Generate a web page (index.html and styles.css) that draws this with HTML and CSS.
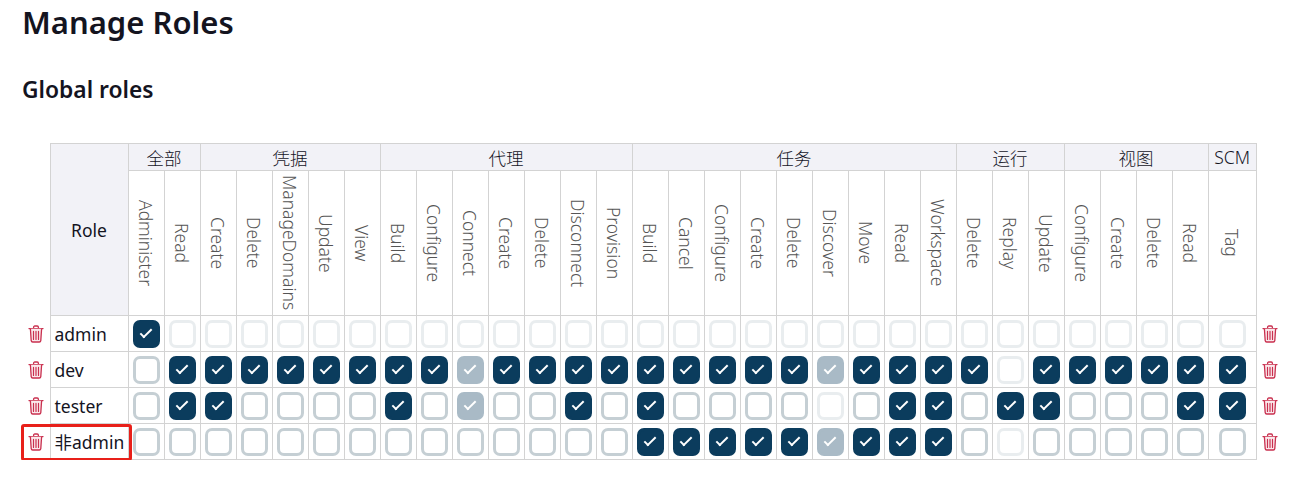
FILE: index.html
```html
<!DOCTYPE html>
<html lang="en">

<head>
    <meta charset="UTF-8">
    <meta name="viewport" content="width=device-width, initial-scale=1.0">
    <title>Manage Roles</title>
    <link rel="stylesheet" href="styles.css">
</head>

<body>

    <svg class="icon-defs" width="0" height="0">
        <symbol id="trash" viewBox="0 0 16 18">
            <path d="M1 3.6h14M5.6 3.4V2.2c0-.7.5-1.2 1.2-1.2h2.4c.7 0 1.2.5 1.2 1.2v1.2" fill="none" stroke="currentColor" stroke-width="1.3" stroke-linecap="round"/>
            <path d="M2.4 3.8l.8 11.8c.1.8.6 1.4 1.5 1.4h6.6c.9 0 1.4-.6 1.5-1.4l.8-11.8" fill="#fbe9ec" stroke="currentColor" stroke-width="1.3"/>
            <path d="M5.5 6.4v8M8 6.4v8M10.5 6.4v8" fill="none" stroke="currentColor" stroke-width="1.2" stroke-linecap="round"/>
        </symbol>
    </svg>

    <h1>Manage Roles</h1>
    <h2>Global roles</h2>

    <table class="role-table">
        <colgroup>
            <col class="col-del">
            <col class="col-role">
            <col span="30" class="col-perm">
            <col class="col-scm">
            <col class="col-del">
        </colgroup>
        <thead>
            <tr class="group-row">
                <th class="blank" rowspan="2"></th>
                <th class="role-head" rowspan="2">Role</th>
                <th colspan="2">全部</th>
                <th colspan="5">凭据</th>
                <th colspan="7">代理</th>
                <th colspan="9">任务</th>
                <th colspan="3">运行</th>
                <th colspan="4">视图</th>
                <th>SCM</th>
                <th class="blank" rowspan="2"></th>
            </tr>
            <tr class="perm-row">
                <th><span>Administer</span></th><th><span>Read</span></th>
                <th><span>Create</span></th><th><span>Delete</span></th><th><span>ManageDomains</span></th><th><span>Update</span></th><th><span>View</span></th>
                <th><span>Build</span></th><th><span>Configure</span></th><th><span>Connect</span></th><th><span>Create</span></th><th><span>Delete</span></th><th><span>Disconnect</span></th><th><span>Provision</span></th>
                <th><span>Build</span></th><th><span>Cancel</span></th><th><span>Configure</span></th><th><span>Create</span></th><th><span>Delete</span></th><th><span>Discover</span></th><th><span>Move</span></th><th><span>Read</span></th><th><span>Workspace</span></th>
                <th><span>Delete</span></th><th><span>Replay</span></th><th><span>Update</span></th>
                <th><span>Configure</span></th><th><span>Create</span></th><th><span>Delete</span></th><th><span>Read</span></th>
                <th><span>Tag</span></th>
            </tr>
        </thead>
        <tbody>
            <tr>
                <td class="del"><svg class="trash"><use href="#trash"/></svg></td>
                <td class="name">admin</td>
                <td><i class="cb on"></i></td><td><i class="cb off"></i></td>
                <td><i class="cb off"></i></td><td><i class="cb off"></i></td><td><i class="cb off"></i></td><td><i class="cb off"></i></td><td><i class="cb off"></i></td>
                <td><i class="cb off"></i></td><td><i class="cb off"></i></td><td><i class="cb off"></i></td><td><i class="cb off"></i></td><td><i class="cb off"></i></td><td><i class="cb off"></i></td><td><i class="cb off"></i></td>
                <td><i class="cb off"></i></td><td><i class="cb off"></i></td><td><i class="cb off"></i></td><td><i class="cb off"></i></td><td><i class="cb off"></i></td><td><i class="cb off"></i></td><td><i class="cb off"></i></td><td><i class="cb off"></i></td><td><i class="cb off"></i></td>
                <td><i class="cb off"></i></td><td><i class="cb off"></i></td><td><i class="cb off"></i></td>
                <td><i class="cb off"></i></td><td><i class="cb off"></i></td><td><i class="cb off"></i></td><td><i class="cb off"></i></td>
                <td><i class="cb off"></i></td>
                <td class="del"><svg class="trash"><use href="#trash"/></svg></td>
            </tr>
            <tr>
                <td class="del"><svg class="trash"><use href="#trash"/></svg></td>
                <td class="name">dev</td>
                <td><i class="cb"></i></td><td><i class="cb on"></i></td>
                <td><i class="cb on"></i></td><td><i class="cb on"></i></td><td><i class="cb on"></i></td><td><i class="cb on"></i></td><td><i class="cb on"></i></td>
                <td><i class="cb on"></i></td><td><i class="cb on"></i></td><td><i class="cb on off"></i></td><td><i class="cb on"></i></td><td><i class="cb on"></i></td><td><i class="cb on"></i></td><td><i class="cb on"></i></td>
                <td><i class="cb on"></i></td><td><i class="cb on"></i></td><td><i class="cb on"></i></td><td><i class="cb on"></i></td><td><i class="cb on"></i></td><td><i class="cb on off"></i></td><td><i class="cb on"></i></td><td><i class="cb on"></i></td><td><i class="cb on"></i></td>
                <td><i class="cb on"></i></td><td><i class="cb off"></i></td><td><i class="cb on"></i></td>
                <td><i class="cb on"></i></td><td><i class="cb on"></i></td><td><i class="cb on"></i></td><td><i class="cb on"></i></td>
                <td><i class="cb on"></i></td>
                <td class="del"><svg class="trash"><use href="#trash"/></svg></td>
            </tr>
            <tr>
                <td class="del"><svg class="trash"><use href="#trash"/></svg></td>
                <td class="name">tester</td>
                <td><i class="cb"></i></td><td><i class="cb on"></i></td>
                <td><i class="cb on"></i></td><td><i class="cb"></i></td><td><i class="cb"></i></td><td><i class="cb"></i></td><td><i class="cb"></i></td>
                <td><i class="cb on"></i></td><td><i class="cb"></i></td><td><i class="cb on off"></i></td><td><i class="cb"></i></td><td><i class="cb"></i></td><td><i class="cb on"></i></td><td><i class="cb"></i></td>
                <td><i class="cb on"></i></td><td><i class="cb"></i></td><td><i class="cb"></i></td><td><i class="cb"></i></td><td><i class="cb"></i></td><td><i class="cb off"></i></td><td><i class="cb"></i></td><td><i class="cb on"></i></td><td><i class="cb on"></i></td>
                <td><i class="cb"></i></td><td><i class="cb on"></i></td><td><i class="cb on"></i></td>
                <td><i class="cb"></i></td><td><i class="cb"></i></td><td><i class="cb"></i></td><td><i class="cb on"></i></td>
                <td><i class="cb on"></i></td>
                <td class="del"><svg class="trash"><use href="#trash"/></svg></td>
            </tr>
            <tr>
                <td class="del marked"><svg class="trash"><use href="#trash"/></svg><div class="red-box"></div></td>
                <td class="name">非admin</td>
                <td><i class="cb"></i></td><td><i class="cb"></i></td>
                <td><i class="cb"></i></td><td><i class="cb"></i></td><td><i class="cb"></i></td><td><i class="cb"></i></td><td><i class="cb"></i></td>
                <td><i class="cb"></i></td><td><i class="cb"></i></td><td><i class="cb"></i></td><td><i class="cb"></i></td><td><i class="cb"></i></td><td><i class="cb"></i></td><td><i class="cb"></i></td>
                <td><i class="cb on"></i></td><td><i class="cb on"></i></td><td><i class="cb on"></i></td><td><i class="cb on"></i></td><td><i class="cb on"></i></td><td><i class="cb on off"></i></td><td><i class="cb on"></i></td><td><i class="cb on"></i></td><td><i class="cb on"></i></td>
                <td><i class="cb"></i></td><td><i class="cb off"></i></td><td><i class="cb"></i></td>
                <td><i class="cb"></i></td><td><i class="cb"></i></td><td><i class="cb"></i></td><td><i class="cb"></i></td>
                <td><i class="cb"></i></td>
                <td class="del"><svg class="trash"><use href="#trash"/></svg></td>
            </tr>
        </tbody>
    </table>

</body>

</html>
```

FILE: styles.css
```css
body {
    font-family: 'Noto Sans', 'Noto Sans CJK SC', sans-serif;
    margin: 0;
    padding: 0 22px;
    background-color: #fff;
    color: #14141f;
    font-size: 17.5px;
}

.icon-defs {
    position: absolute;
}

h1 {
    font-size: 31px;
    font-weight: 600;
    line-height: 40px;
    margin: 2px 0 0;
}

h2 {
    font-size: 22.8px;
    font-weight: 600;
    line-height: 28px;
    margin: 34px 0 39px;
}

.role-table {
    border-collapse: collapse;
    table-layout: fixed;
    width: 1262px;
}

.col-del {
    width: 28px;
}

.col-role {
    width: 78px;
}

.col-perm {
    width: 36px;
}

.col-scm {
    width: 48px;
}

th,
td {
    border: 1px solid #d3d3d3;
    padding: 0;
    text-align: center;
}

th {
    font-weight: 300;
}

.group-row th {
    background-color: #f2f2f7;
    height: 26px;
    font-weight: 300;
}

.group-row .blank {
    background: none;
    border: none;
}

.group-row .role-head {
    background-color: #f2f2f7;
    font-weight: 400;
}

.perm-row th {
    height: 144px;
}

.perm-row span {
    writing-mode: vertical-rl;
    display: inline-block;
    vertical-align: middle;
    color: #555;
}

tbody tr {
    height: 36px;
}

td.del {
    border: none;
    position: relative;
    color: #c9304f;
}

.trash {
    display: block;
    width: 16px;
    height: 18px;
    margin: 0 auto;
}

td.name {
    text-align: left;
    padding-left: 4px;
    white-space: nowrap;
}

.cb {
    display: block;
    box-sizing: border-box;
    position: relative;
    width: 27px;
    height: 28px;
    margin: 0 auto;
    border: 3px solid #c5cfd4;
    border-radius: 7px;
}

.cb.on {
    background-color: #0b3c5d;
    border-color: #0b3c5d;
}

.cb.on::after {
    content: "";
    position: absolute;
    left: 7px;
    top: 3px;
    width: 4px;
    height: 10px;
    border: solid #fff;
    border-width: 0 2.4px 2.4px 0;
    transform: rotate(45deg);
}

.cb.off {
    opacity: 0.38;
}

.cb.on.off {
    opacity: 0.35;
}

.red-box {
    position: absolute;
    left: -1px;
    top: 0;
    width: 111px;
    height: 37px;
    box-sizing: border-box;
    border: 3px solid #e8201a;
    border-radius: 3px;
}
```
